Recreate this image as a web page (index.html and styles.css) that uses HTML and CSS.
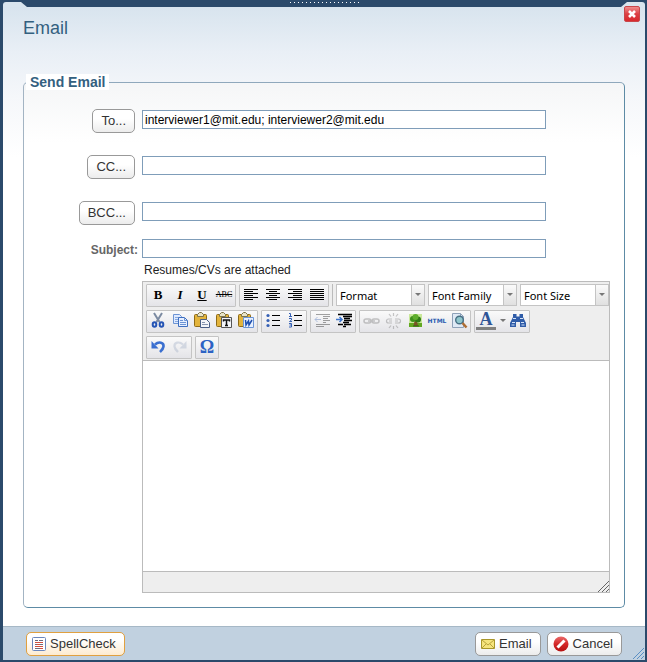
FILE: index.html
```html
<!doctype html>
<html lang="en">
<head>
<meta charset="utf-8">
<title>Email</title>
<link rel="stylesheet" href="styles.css">
</head>

<body>
<form class="dialog" onsubmit="return false">
	<div class="topbar">
		<span class="tab tab-left"></span>
		<span class="dots"></span>
		<span class="tab tab-right"></span>
	</div>
	<button type="button" class="close" aria-label="Close">
		<svg width="16" height="16" viewBox="0 0 16 16"><path d="M5 5l6 6M11 5l-6 6" stroke="#fff" stroke-width="2.6"/></svg>
	</button>

	<div class="panel">
		<h1>Email</h1>
		<fieldset>
			<legend>Send Email</legend>

			<div class="row">
				<div class="label"><button type="button" class="btn">To...</button></div>
				<input type="text" class="text" aria-label="To" value="interviewer1@mit.edu; interviewer2@mit.edu">
			</div>
			<div class="row">
				<div class="label"><button type="button" class="btn">CC...</button></div>
				<input type="text" class="text" aria-label="CC">
			</div>
			<div class="row">
				<div class="label"><button type="button" class="btn">BCC...</button></div>
				<input type="text" class="text" aria-label="BCC">
			</div>
			<div class="row subject">
				<label class="label" for="subject">Subject:</label>
				<input type="text" class="text" id="subject">
			</div>

			<div class="message">
				<p>Resumes/CVs are attached</p>
				<div class="editor">
					<div class="toolbar">
						<div class="tools">
							<div class="group">
								<button type="button" class="tool bold">B</button>
								<button type="button" class="tool italic">I</button>
								<button type="button" class="tool underline">U</button>
								<button type="button" class="tool strike">ABC</button>
							</div>
							<div class="group">
								<button type="button" class="tool" aria-label="Align left"><svg width="20" height="20"><path d="M3 4.500h14M3 6.500h9M3 8.500h14M3 10.500h9M3 12.500h14M3 14.500h9" stroke="#000"/></svg></button>
								<button type="button" class="tool" aria-label="Align center"><svg width="20" height="20"><path d="M3 4.500h14M6 6.500h8M3 8.500h14M6 10.500h8M3 12.500h14M6 14.500h8" stroke="#000"/></svg></button>
								<button type="button" class="tool" aria-label="Align right"><svg width="20" height="20"><path d="M3 4.500h14M8 6.500h9M3 8.500h14M8 10.500h9M3 12.500h14M8 14.500h9" stroke="#000"/></svg></button>
								<button type="button" class="tool" aria-label="Justify"><svg width="20" height="20"><path d="M3 4.500h14M3 6.500h14M3 8.500h14M3 10.500h14M3 12.500h14M3 14.500h14" stroke="#000"/></svg></button>
							</div>
							<span class="sep"></span>
							<span class="drop"><select aria-label="Format"><option>Format</option></select></span>
							<span class="drop"><select aria-label="Font Family"><option>Font Family</option></select></span>
							<span class="drop"><select aria-label="Font Size"><option>Font Size</option></select></span>
						</div>

						<div class="tools">
							<div class="group">
								<button type="button" class="tool" aria-label="Cut"><svg width="20" height="20"><path d="M6 2l5.500 9M14 2l-5.500 9" stroke="#7c8ba2" stroke-width="2" fill="none"/><g fill="none" stroke="#2454b5" stroke-width="2"><ellipse cx="6.500" cy="13.500" rx="1.800" ry="2.300"/><ellipse cx="13.500" cy="13.500" rx="1.800" ry="2.300"/></g></svg></button>
								<button type="button" class="tool" aria-label="Copy"><svg width="20" height="20"><path d="M3.500 3.500h6l2 2v7h-8z" fill="#dfeaff" stroke="#6c94d4"/><path d="M5 6.500h5M5 8.500h5M5 10.500h4" stroke="#86a9df"/><path d="M8.500 6.500h6l3 3v6h-9z" fill="#e6efff" stroke="#3f6fc0"/><path d="M14.500 6.500v3h3M10 9.500h3M10 11.500h6M10 13.500h6" stroke="#6c94d4" fill="none"/></svg></button>
								<button type="button" class="tool" aria-label="Paste"><svg width="20" height="20"><rect x="2.500" y="3.500" width="12" height="12" rx="1" fill="#e3b43c" stroke="#8e6b18"/><path d="M5.500 5.500v-2l2-2h2l2 2v2z" fill="#e9e4c8" stroke="#7e7448"/><path d="M8.500 8.500h6l3 3v5h-9z" fill="#f4f6fa" stroke="#4a5f87"/><path d="M10 11.500h3M10 13.500h6" stroke="#8795b0"/></svg></button>
								<button type="button" class="tool" aria-label="Paste as text"><svg width="20" height="20"><rect x="2.500" y="3.500" width="12" height="12" rx="1" fill="#e3b43c" stroke="#8e6b18"/><path d="M5.500 5.500v-2l2-2h2l2 2v2z" fill="#e9e4c8" stroke="#7e7448"/><path d="M7.500 6.500h10v10h-10z" fill="#f4f6fa" stroke="#555"/><path d="M9.500 10.500v-1.500h6v1.500M12.500 9v5M11 14.500h3" fill="none" stroke="#111" stroke-width="1.500"/></svg></button>
								<button type="button" class="tool" aria-label="Paste from Word"><svg width="20" height="20"><rect x="2.500" y="3.500" width="12" height="12" rx="1" fill="#e3b43c" stroke="#8e6b18"/><path d="M5.500 5.500v-2l2-2h2l2 2v2z" fill="#e9e4c8" stroke="#7e7448"/><path d="M7.500 6.500h10v10h-10z" fill="#e7f0ff" stroke="#6a94d6"/><path d="M9.500 9l.500 5 2.500-4 .5 4 3-5" fill="none" stroke="#1e4fae" stroke-width="1.500"/></svg></button>
							</div>
							<div class="group">
								<button type="button" class="tool" aria-label="Bullet list"><svg width="20" height="20"><path d="M9 4.500h8M9 9.500h8M9 14.500h8" stroke="#000"/><g fill="#3560b4"><circle cx="5" cy="4.500" r="1.600"/><circle cx="5" cy="9.500" r="1.600"/><circle cx="5" cy="14.500" r="1.600"/></g></svg></button>
								<button type="button" class="tool" aria-label="Numbered list"><svg width="20" height="20"><path d="M9 4.500h8M9 9.500h8M9 14.500h8" stroke="#000"/><path d="M4 2.500h1.500v3M4 5.500h3M4 7.500h2.500v1.500l-2 1.500h2.500M4 12.500h2.500v3.500h-2.500M4.500 14h2" fill="none" stroke="#3560b4"/></svg></button>
							</div>
							<div class="group">
								<button type="button" class="tool faded" aria-label="Outdent" disabled><svg width="20" height="20"><path d="M4 3.500h14M11 5.500h7M11 7.500h5M11 9.500h7M11 11.500h3M4 13.500h14M4 15.500h8" stroke="#000"/><path d="M9 8.500H3M5.500 6L3 8.500 5.500 11" fill="none" stroke="#3560b4"/></svg></button>
								<button type="button" class="tool" aria-label="Indent"><svg width="20" height="20"><path d="M4 3.500h14M9 5.500h9M10 7.500h6M10 9.500h8M9 11.500h6M4 13.500h5M10 13.500h7M9 15.500h3" stroke="#000" stroke-width="1.300"/><path d="M2 8.500h6M5.500 6L8 8.500 5.500 11" fill="none" stroke="#3f78d0" stroke-width="1.500"/></svg></button>
							</div>
							<div class="group">
								<button type="button" class="tool faded" aria-label="Link" disabled><svg width="20" height="20"><g fill="none" stroke="#666" stroke-width="1.500"><rect x="3" y="8" width="7" height="4" rx="2"/><rect x="11" y="8" width="7" height="4" rx="2"/><path d="M7 10h7"/></g></svg></button>
								<button type="button" class="tool faded" aria-label="Unlink" disabled><svg width="20" height="20"><g fill="none" stroke="#666" stroke-width="1.200"><path d="M9 8H5.500a2 2 0 0 0 0 4H9M12 8h3.500a2 2 0 0 1 0 4H12M6 10h3M12 10h3M10.500 2v3M6 3l2 2.500M15 3l-2 2.500M10.500 15v3M6 17l2-2.500M15 17l-2-2.500"/></g></svg></button>
								<button type="button" class="tool" aria-label="Image"><svg width="20" height="20"><path d="M4 3h13v13H4z" fill="#c9e89a"/><path d="M4 12h13v4H4z" fill="#62a822"/><path d="M9.500 10h2.500l1 5H8.500z" fill="#7a5428"/><circle cx="8" cy="8" r="3" fill="#3f8f1e"/><circle cx="13" cy="8.500" r="3" fill="#2f7a16"/><circle cx="10.500" cy="6" r="3" fill="#5fae2d"/><path d="M8 15h6" stroke="#2f6614"/></svg></button>
								<button type="button" class="tool html">HTML</button>
								<button type="button" class="tool" aria-label="Preview"><svg width="20" height="20"><path d="M3.500 2.500h8l3 3v11h-11z" fill="#dfe9f5" stroke="#8ea1b8"/><path d="M11.500 2.500v3h3" fill="none" stroke="#8ea1b8"/><circle cx="10.500" cy="9" r="3.800" fill="#8fc6cc" stroke="#466f84" stroke-width="1.400"/><path d="M13.500 12l4 4.500" stroke="#ad6c31" stroke-width="2.500"/></svg></button>
							</div>
							<div class="group">
								<button type="button" class="tool color">A</button>
								<button type="button" class="tool more" aria-label="More colors"><svg width="12" height="20"><path d="M4 8h6l-3 3z" fill="#777"/></svg></button>
								<button type="button" class="tool" aria-label="Find"><svg width="20" height="20"><path d="M5 3h3.500v2.500h3V3H15v3l3 6v4h-6v-5h-4v5H2v-4l3-6z" fill="#2f5ca8"/><path d="M5 7.500h3M12 7.500h3M4 11.500h3M13 11.500h3M3.500 14h3M13.500 14h3" stroke="#d5e3f8"/></svg></button>
							</div>
						</div>

						<div class="tools">
							<div class="group">
								<button type="button" class="tool" aria-label="Undo"><svg width="20" height="20"><path d="M7 7.500c4-3.500 9-2 8.500 2-.3 2.500-2 4-3.500 5.500" fill="none" stroke="#3a6fd0" stroke-width="2.600"/><path d="M3.500 4v7.500h7z" fill="#3a6fd0"/></svg></button>
								<button type="button" class="tool faded" aria-label="Redo" disabled><svg width="20" height="20"><path d="M13 7.500c-4-3.500-9-2-8.500 2 .3 2.500 2 4 3.500 5.500" fill="none" stroke="#9aa9c2" stroke-width="2.200"/><path d="M16.500 4v7.500h-7z" fill="#9aa9c2"/></svg></button>
							</div>
							<div class="group">
								<button type="button" class="tool omega" aria-label="Special character">&Omega;</button>
							</div>
						</div>
					</div>
					<div class="content" contenteditable="true" role="textbox" aria-label="Message"></div>
					<div class="status">
						<svg width="12" height="12"><path d="M1 12L12 1M5 12l7-7M9 12l3-3" stroke="#666"/></svg>
					</div>
				</div>
			</div>
		</fieldset>
	</div>

	<div class="footer">
		<button type="button" class="btn spell">
			<svg width="14" height="14"><rect x=".5" y=".5" width="13" height="13" rx="1" fill="#fff" stroke="#6a86bd"/><path d="M3 3.500h3M7 3.500h4M3 7.500h2M8 7.500h3M3 11.500h5" stroke="#6b6b7d"/><path d="M3 5.500h8M5 7.500h3M3 9.500h8M8 11.500h3" stroke="#d2503f"/></svg>
			SpellCheck
		</button>
		<button type="button" class="btn send">
			<svg width="14" height="14"><path d="M.5 2.500h13v9H.5z" fill="#f5e47c" stroke="#a8962a"/><path d="M1 3l6 5 6-5M1 11l4-4M13 11L9 7" fill="none" stroke="#b8a23a"/></svg>
			Email
		</button>
		<button type="button" class="btn cancel">
			<svg width="16" height="16"><defs><linearGradient id="red" x2="0" y2="1"><stop offset="0" stop-color="#ea6a6a"/><stop offset=".5" stop-color="#d42828"/><stop offset="1" stop-color="#b51212"/></linearGradient></defs><circle cx="8" cy="8" r="7.500" fill="url(#red)"/><path d="M4.500 11.500L11.500 4.500" stroke="#fff" stroke-width="3"/></svg>
			Cancel
		</button>
		<svg class="grip" width="12" height="12"><path d="M1 12L12 1M5 12l7-7M9 12l3-3" stroke="#5a8fc4"/></svg>
	</div>
</form>
</body>
</html>
```

FILE: styles.css
```css
*{
	box-sizing:border-box; margin:0; padding:0;
}
body{
	background:#2b4a6b; color:#222;
	font:12px/16px "Liberation Sans",Arial,sans-serif;
}
button,input,select{
	font:inherit; color:inherit;
}
svg{
	display:block; flex:none;
}
.dialog{
	position:relative; min-height:100vh;
	display:flex; flex-direction:column;
	border:solid #2b4a6b; border-width:0 2px 2px 3px;
}

/* top edge */
.topbar{
	height:7px; padding-top:2px;
	display:flex; justify-content:space-between;
}
	.tab{
		width:24px; height:5px; background:#d9e5ee;
	}
	.tab-left{
		border-top-left-radius:3px; clip-path:polygon(0 0,18px 0,100% 100%,0 100%);
	}
	.tab-right{
		border-top-right-radius:3px; clip-path:polygon(6px 0,100% 0,100% 100%,0 100%);
	}
	.dots{
		width:69px; height:1px;
		background:repeating-linear-gradient(90deg,#fff 0,#fff 1px,transparent 1px,transparent 4px);
	}
.close{
	position:absolute; top:6px; right:5px;
	width:16px; height:16px; border:1px solid #c8474b; border-radius:2px;
	background:linear-gradient(#ef8c8c,#dc4044 50%,#d8292d);
	display:flex; align-items:center; justify-content:center;
}

.panel{
	flex:1; padding:0 20px 18px;
	background:linear-gradient(#d8e4ee,#e9eff6 45px,#f5f7fa 90px,#fff 150px);
}
h1{
	height:67px; padding-top:10px;
	font-size:18px; line-height:22px; font-weight:normal; color:#33607f;
}
fieldset{
	min-width:0; padding:19px 14px 14px 0;
	border:1px solid #5d8ba5; border-left-color:#a3b4c3; border-top-color:#8fa8bc; border-radius:5px;
	background:linear-gradient(#f5f6f7,#fff 60px);
}
legend{
	margin-left:2px; padding:0 4px; background:#fff;
	font-size:14px; font-weight:bold; color:#33607f;
}
.row{
	display:flex; gap:4px; margin-bottom:22px;
}
	.label{
		width:114px; flex:none; text-align:right;
	}
	.label .btn{
		margin-right:3px;
	}
	.text{
		flex:1; min-width:0; max-width:404px; height:19px; margin-top:1px; padding:0 2px;
		border:1px solid #7f9db9; background:#fff; color:#000;
	}
.subject{
	margin:-8px 0 0;
}
	.subject .label{
		padding-top:3px; font-weight:bold; color:#666;
	}
	.subject .text{
		margin-top:0;
	}
.btn{
	height:24px; padding:0 8px;
	display:inline-flex; align-items:center; gap:4px;
	border:1px solid #999; border-radius:5px; font-size:13px;
	background:linear-gradient(#fff 40%,#ececec); color:#333;
}

/* editor */
.message{
	max-width:586px; padding-left:118px;
}
	.message p{
		height:23px; padding:4px 2px 0;
	}
.editor{
	border:1px solid #bbb; background:#fff;
}
.toolbar{
	display:flex; flex-direction:column; gap:3px;
	padding:2px 0 1px 3px; background:#eee; border-bottom:1px solid #bbb;
}
.tools{
	height:23px; display:flex; align-items:flex-start; gap:3px;
}
.group{
	display:flex; gap:2px; padding:0 1px; height:23px;
	border:1px solid #c4c4c4; border-radius:1px;
	background:linear-gradient(#fafafa,#e4e4e8);
}
.tool{
	width:20px; height:20px; flex:none; border:0; background:none; color:#000;
	display:flex; align-items:center; justify-content:center;
}
	.bold,.italic,.underline{
		font:bold 13px/20px "Liberation Serif",serif;
	}
	.italic{
		font-style:italic;
	}
	.underline{
		text-decoration:underline;
	}
	.strike{
		font:8px/20px "Liberation Serif",serif; text-decoration:line-through;
	}
	.html{
		font:bold 6px/20px "DejaVu Sans",sans-serif; color:#2c5bb0;
	}
	.color{
		height:19px; border-bottom:3px solid #808080;
		font:bold 18px/16px "Liberation Serif",serif; color:#2f5597;
	}
	.omega{
		font:bold 18px/20px "Liberation Serif",serif; color:#2c62c4;
	}
	.more{
		width:8px;
	}
	.faded{
		opacity:.35;
	}
.sep{
	width:1px; height:22px; background:#bbb;
}
.drop{
	position:relative; width:89px; height:22px;
	border:1px solid #c4c4c4; background:#fff;
}
	.drop select{
		position:relative; width:100%; height:20px; padding:1px 14px 0 3px;
		border:0; appearance:none; background:none;
		font:11px/18px "Noto Sans",sans-serif; color:#000;
	}
	.drop::before{
		content:""; position:absolute; top:0; right:0; bottom:0; width:12px;
		border-left:1px solid #c4c4c4; background:linear-gradient(#fafafa,#e0e0e0);
	}
	.drop::after{
		content:""; position:absolute; top:8px; right:3px; pointer-events:none;
		border:3px solid transparent; border-top-color:#777; border-bottom:0;
	}
.content{
	height:210px;
}
.status{
	height:21px; border-top:1px solid #bbb; background:#eee;
	display:flex; justify-content:flex-end; align-items:flex-end;
}

.footer{
	position:relative; height:34px; padding:0 23px;
	display:flex; align-items:center; gap:6px;
	background:#c1d1e0; border-top:1px solid #a6b8c6;
}
	.footer .btn{
		padding:0 8px 0 5px;
	}
	.footer .spell{
		margin-right:auto; border-color:#e0a040;
		background:linear-gradient(#fff 30%,#fdebd0);
	}
	.grip{
		position:absolute; right:1px; bottom:1px;
	}
```
